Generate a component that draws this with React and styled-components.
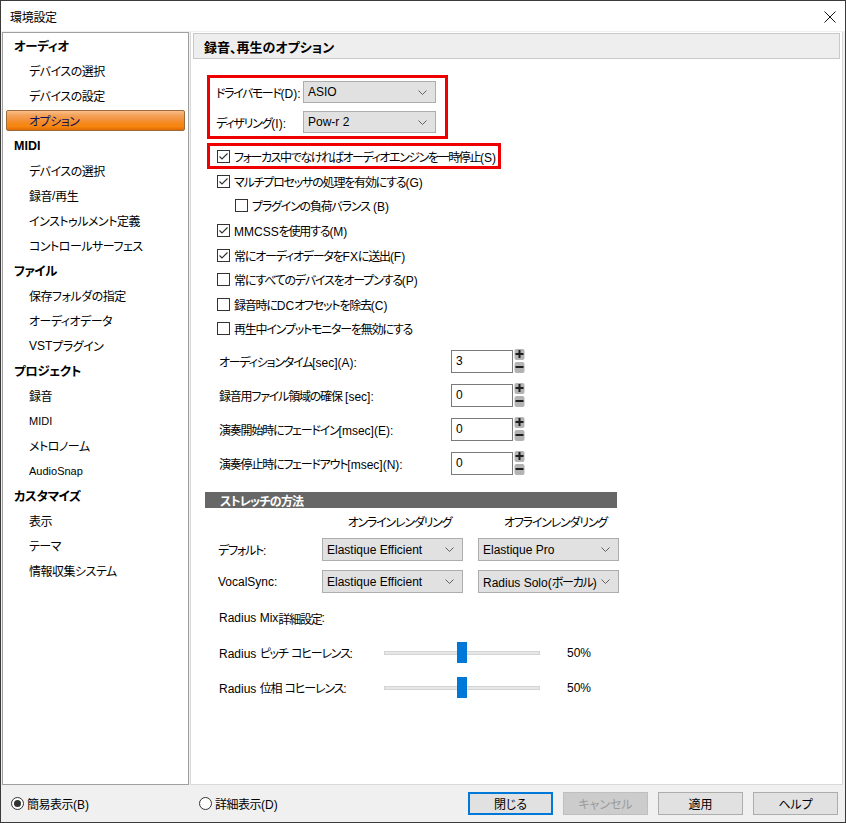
import React from "react";
import styled, { createGlobalStyle, css } from "styled-components";

const FONT = `"Liberation Sans", "Noto Sans CJK JP", sans-serif`;

const GlobalStyle = createGlobalStyle`
  html, body { margin: 0; padding: 0; background: #f0f0f0; }
  body {
    font-family: ${FONT};
    font-size: 12px;
    color: #000;
    font-feature-settings: "palt";
  }
  * { box-sizing: border-box; }
`;

/* Japanese runs are rendered a little tighter, like Meiryo UI's narrow kana */
const Jp = styled.span`
  letter-spacing: ${(p) => p.$ls}px;
`;

const JP_RE = /([\u3000-\u30ff\u4e00-\u9fff\uff00-\uffef]+)/;

function T({ children, ls = -1.2 }) {
  const parts = String(children).split(JP_RE);
  return parts.map((p, i) =>
    JP_RE.test(p) ? (
      <Jp key={i} $ls={ls}>
        {p}
      </Jp>
    ) : (
      <React.Fragment key={i}>{p}</React.Fragment>
    )
  );
}

const Window = styled.div`
  width: 846px;
  height: 823px;
  border: 1px solid #3a3a3a;
  background: #f0f0f0;
  display: flex;
  flex-direction: column;
`;

const TitleBar = styled.div`
  height: 30px;
  flex: none;
  background: #fff;
  display: flex;
  align-items: center;
  justify-content: space-between;
  padding: 0 9px 0 9px;
`;

const TitleText = styled.span`
  font-size: 12px;
  letter-spacing: -0.3px;
`;

const CloseIcon = styled.svg`
  width: 12px;
  height: 12px;
  margin-top: 1px;
`;

const Body = styled.div`
  flex: 1;
  min-height: 0;
  display: flex;
  padding: 1px 2px 0 1px;
`;

const Sidebar = styled.nav`
  width: 187px;
  flex: none;
  background: #fff;
  border: 1px solid #a0a0a0;
  display: flex;
  flex-direction: column;
`;

const NavHeader = styled.div`
  height: 25px;
  display: flex;
  align-items: center;
  padding-left: 11px;
  font-weight: bold;
  font-size: 12.5px;
`;

const NavItem = styled.div`
  height: 25px;
  display: flex;
  align-items: center;
  padding-left: 26px;
  font-size: ${(p) => (p.$small ? "11px" : "12px")};
  ${(p) =>
    p.$selected &&
    css`
      height: 21px;
      margin: 2px 3px;
      padding-left: 22px;
      border: 1px solid #9c6b39;
      border-radius: 2px;
      color: #10105a;
      background: linear-gradient(
        to bottom,
        #f9c08c 0%,
        #f4a35a 22%,
        #f39440 45%,
        #f58a1e 62%,
        #f7860f 82%,
        #de6a02 100%
      );
    `}
`;

const Main = styled.section`
  flex: 1;
  margin-left: 1px;
  background: #fff;
  border: 1px solid #d9d9d9;
  border-top: none;
  display: flex;
  flex-direction: column;
`;

const PanelHeader = styled.div`
  margin: 1px 2px 0 2px;
  height: 26px;
  flex: none;
  border: 1px solid #c8c8c8;
  background: #eeeeee;
  display: flex;
  align-items: center;
  padding-left: 10px;
  font-weight: bold;
  font-size: 13px;
`;

const PanelContent = styled.div`
  padding: 16px 0 0 14px;
  display: flex;
  flex-direction: column;
`;

const RedBox = styled.div`
  border: 3px solid #ee0000;
  margin-left: 2px;
  width: ${(p) => p.$width}px;
  display: flex;
  flex-direction: column;
`;

const DriverBox = styled(RedBox)`
  padding: 3px 9px 3px 6px;
  gap: 8px;
`;

const FocusBox = styled(RedBox)`
  height: 26px;
  margin-top: 4px;
  padding-left: 7px;
  justify-content: center;
`;

const FieldRow = styled.div`
  height: 22px;
  display: flex;
  align-items: center;
`;

const FieldLabel = styled.span`
  width: ${(p) => p.$width}px;
  flex: none;
  white-space: nowrap;
`;

const SelectBox = styled.div`
  width: ${(p) => p.$width}px;
  height: ${(p) => p.$height || 22}px;
  flex: none;
  background: #e1e1e1;
  border: 1px solid #adadad;
  display: flex;
  align-items: center;
  justify-content: space-between;
  padding: 0 8px 0 4px;
  font-size: 12px;
  white-space: nowrap;
`;

const Chevron = styled.svg`
  width: 9px;
  height: 5px;
  flex: none;
`;

function Select({ value, width, height }) {
  return (
    <SelectBox $width={width} $height={height}>
      <span>
        <T>{value}</T>
      </span>
      <Chevron viewBox="0 0 9 5">
        <polyline points="0.5,0.5 4.5,4.5 8.5,0.5" fill="none" stroke="#606060" strokeWidth="1" />
      </Chevron>
    </SelectBox>
  );
}

const CheckList = styled.div`
  display: flex;
  flex-direction: column;
`;

const CheckRow = styled.label`
  height: 24.6px;
  display: flex;
  align-items: center;
  gap: 4px;
  padding-left: ${(p) => (p.$indent ? 30 : 12)}px;
  white-space: nowrap;
`;

const InBoxCheck = styled.label`
  display: flex;
  align-items: center;
  gap: 4px;
  white-space: nowrap;
`;

const Box = styled.svg`
  width: 13px;
  height: 13px;
  flex: none;
`;

function CheckBox({ checked }) {
  return (
    <Box viewBox="0 0 13 13">
      <rect x="0.5" y="0.5" width="12" height="12" fill="#fff" stroke="#333" />
      {checked && (
        <polyline points="2.5,6.5 5,9 10.5,3.5" fill="none" stroke="#333" strokeWidth="1.2" />
      )}
    </Box>
  );
}

const SpinList = styled.div`
  margin-top: 3px;
  display: flex;
  flex-direction: column;
`;

const SpinRow = styled.div`
  height: 34px;
  display: flex;
  align-items: center;
  padding-left: 14px;
`;

const SpinInput = styled.div`
  width: 62px;
  height: 23px;
  flex: none;
  border: 1px solid #7a7a7a;
  background: #fff;
  display: flex;
  align-items: center;
  padding-left: 4px;
`;

const SpinArrows = styled.svg`
  width: 11px;
  height: 24px;
  margin-left: 1px;
  flex: none;
`;

function Spinner({ value }) {
  return (
    <>
      <SpinInput>{value}</SpinInput>
      <SpinArrows viewBox="0 0 11 24">
        <rect x="0.5" y="0" width="10" height="11" rx="2" fill="#b3b3b3" />
        <path d="M5.5 1v8M1.5 5h8" stroke="#1e1e1e" strokeWidth="2" />
        <rect x="0.5" y="13" width="10" height="11" rx="2" fill="#b3b3b3" />
        <path d="M1.5 18h8" stroke="#1e1e1e" strokeWidth="2" />
      </SpinArrows>
    </>
  );
}

const SectionBar = styled.div`
  margin-top: 12px;
  width: 412px;
  height: 16px;
  background: #676767;
  color: #fff;
  font-weight: bold;
  font-size: 12px;
  display: flex;
  align-items: center;
  padding-left: 15px;
`;

const StretchGrid = styled.div`
  margin-left: 13px;
  margin-top: 2px;
  display: grid;
  grid-template-columns: 89px 141px 141px;
  grid-template-rows: 22px 6px 23px 9px 23px;
  column-gap: 15px;
  align-items: center;
`;

const ColHead = styled.span`
  text-align: center;
  padding-left: 14px;
  white-space: nowrap;
`;

const RowSpacer = styled.div`
  grid-column: 1 / -1;
`;

const PlainRow = styled.div`
  margin-top: 13px;
  height: 24px;
  display: flex;
  align-items: center;
  padding-left: 14px;
`;

const SliderList = styled.div`
  margin-top: 5px;
  display: flex;
  flex-direction: column;
`;

const SliderRow = styled.div`
  height: 35px;
  display: flex;
  align-items: center;
  padding-left: 14px;
`;

const Track = styled.div`
  position: relative;
  width: 156px;
  height: 4px;
  flex: none;
  background: #e7e7e7;
  border: 1px solid #d4d4d4;
`;

const Thumb = styled.div`
  position: absolute;
  top: -10px;
  width: 10px;
  height: 21px;
  background: #0078d7;
`;

const Percent = styled.span`
  margin-left: 27px;
`;

const Footer = styled.footer`
  height: 37px;
  flex: none;
  display: flex;
  align-items: center;
  padding: 0 7px 0 10px;
`;

const RadioItem = styled.label`
  width: ${(p) => p.$width}px;
  display: flex;
  align-items: center;
  gap: 3px;
  font-size: 12px;
`;

const RadioSvg = styled.svg`
  width: 13px;
  height: 13px;
  flex: none;
`;

function Radio({ checked }) {
  return (
    <RadioSvg viewBox="0 0 13 13">
      <circle cx="6.5" cy="6.5" r="6" fill="#fff" stroke="#333" />
      {checked && <circle cx="6.5" cy="6.5" r="3.5" fill="#333" />}
    </RadioSvg>
  );
}

const ButtonBar = styled.div`
  margin-left: auto;
  display: flex;
  gap: 10px;
`;

const Button = styled.button`
  width: 85px;
  height: 23px;
  font-family: ${FONT};
  font-size: 12px;
  font-feature-settings: "palt";
  color: #000;
  background: #e1e1e1;
  border: 1px solid #adadad;
  padding: 0;
  ${(p) =>
    p.$default &&
    css`
      border: 2px solid #0078d7;
    `}
  ${(p) =>
    p.disabled &&
    css`
      background: #cccccc;
      border-color: #bfbfbf;
      color: #9b9b9b;
    `}
`;

const nav = [
  { h: "オーディオ" },
  { t: "デバイスの選択" },
  { t: "デバイスの設定" },
  { t: "オプション", sel: true },
  { h: "MIDI" },
  { t: "デバイスの選択" },
  { t: "録音/再生" },
  { t: "インストゥルメント定義" },
  { t: "コントロールサーフェス" },
  { h: "ファイル" },
  { t: "保存フォルダの指定" },
  { t: "オーディオデータ" },
  { t: "VSTプラグイン" },
  { h: "プロジェクト" },
  { t: "録音" },
  { t: "MIDI", small: true },
  { t: "メトロノーム" },
  { t: "AudioSnap", small: true },
  { h: "カスタマイズ" },
  { t: "表示" },
  { t: "テーマ" },
  { t: "情報収集システム" },
];

const checks = [
  { t: "マルチプロセッサの処理を有効にする(G)", c: true },
  { t: "プラグインの負荷バランス (B)", c: false, indent: true },
  { t: "MMCSSを使用する(M)", c: true },
  { t: "常にオーディオデータをFXに送出(F)", c: true },
  { t: "常にすべてのデバイスをオープンする(P)", c: false },
  { t: "録音時にDCオフセットを除去(C)", c: false },
  { t: "再生中インプットモニターを無効にする", c: false },
];

const spins = [
  { t: "オーディションタイム[sec](A):", v: "3" },
  { t: "録音用ファイル領域の確保 [sec]:", v: "0" },
  { t: "演奏開始時にフェードイン[msec](E):", v: "0" },
  { t: "演奏停止時にフェードアウト[msec](N):", v: "0" },
];

export default function App() {
  return (
    <>
      <GlobalStyle />
      <Window>
        <TitleBar>
          <TitleText>環境設定</TitleText>
          <CloseIcon viewBox="0 0 12 12">
            <path d="M0.5 0.5L11.5 11.5M11.5 0.5L0.5 11.5" stroke="#111" strokeWidth="1" />
          </CloseIcon>
        </TitleBar>
        <Body>
          <Sidebar>
            {nav.map((n, i) =>
              n.h ? (
                <NavHeader key={i}>
                  <T ls={-0.4}>{n.h}</T>
                </NavHeader>
              ) : (
                <NavItem key={i} $selected={n.sel} $small={n.small}>
                  <T ls={-0.5}>{n.t}</T>
                </NavItem>
              )
            )}
          </Sidebar>
          <Main>
            <PanelHeader>録音、再生のオプション</PanelHeader>
            <PanelContent>
              <DriverBox $width={241}>
                <FieldRow>
                  <FieldLabel $width={87}>
                    <T ls={-1.4}>ドライバモード(D):</T>
                  </FieldLabel>
                  <Select value="ASIO" width={133} />
                </FieldRow>
                <FieldRow>
                  <FieldLabel $width={87}>
                    <T>ディザリング(I):</T>
                  </FieldLabel>
                  <Select value="Pow-r 2" width={133} />
                </FieldRow>
              </DriverBox>
              <FocusBox $width={294}>
                <InBoxCheck>
                  <CheckBox checked />
                  <span>
                    <T ls={-1.4}>フォーカス中でなければオーディオエンジンを一時停止(S)</T>
                  </span>
                </InBoxCheck>
              </FocusBox>
              <CheckList>
                {checks.map((c, i) => (
                  <CheckRow key={i} $indent={c.indent}>
                    <CheckBox checked={c.c} />
                    <span>
                      <T>{c.t}</T>
                    </span>
                  </CheckRow>
                ))}
              </CheckList>
              <SpinList>
                {spins.map((s, i) => (
                  <SpinRow key={i}>
                    <FieldLabel $width={232}>
                      <T>{s.t}</T>
                    </FieldLabel>
                    <Spinner value={s.v} />
                  </SpinRow>
                ))}
              </SpinList>
              <SectionBar>
                <T ls={-0.8}>ストレッチの方法</T>
              </SectionBar>
              <StretchGrid>
                <span />
                <ColHead>
                  <T>オンラインレンダリング</T>
                </ColHead>
                <ColHead>
                  <T>オフラインレンダリング</T>
                </ColHead>
                <RowSpacer />
                <span>
                  <T>デフォルト:</T>
                </span>
                <Select value="Elastique Efficient" width={141} height={23} />
                <Select value="Elastique Pro" width={141} height={23} />
                <RowSpacer />
                <span>VocalSync:</span>
                <Select value="Elastique Efficient" width={141} height={23} />
                <Select value="Radius Solo(ボーカル)" width={141} height={23} />
              </StretchGrid>
              <PlainRow>
                <T>Radius Mix詳細設定:</T>
              </PlainRow>
              <SliderList>
                {["Radius ピッチ コヒーレンス:", "Radius 位相 コヒーレンス:"].map((t, i) => (
                  <SliderRow key={i}>
                    <FieldLabel $width={165}>
                      <T>{t}</T>
                    </FieldLabel>
                    <Track>
                      <Thumb style={{ left: `${0.5 * 156 - 6}px` }} />
                    </Track>
                    <Percent>50%</Percent>
                  </SliderRow>
                ))}
              </SliderList>
            </PanelContent>
          </Main>
        </Body>
        <Footer>
          <RadioItem $width={188}>
            <Radio checked />
            <span>
              <T ls={-0.5}>簡易表示(B)</T>
            </span>
          </RadioItem>
          <RadioItem $width={120}>
            <Radio />
            <span>
              <T ls={-0.5}>詳細表示(D)</T>
            </span>
          </RadioItem>
          <ButtonBar>
            <Button $default>閉じる</Button>
            <Button disabled>キャンセル</Button>
            <Button>適用</Button>
            <Button>ヘルプ</Button>
          </ButtonBar>
        </Footer>
      </Window>
    </>
  );
}
